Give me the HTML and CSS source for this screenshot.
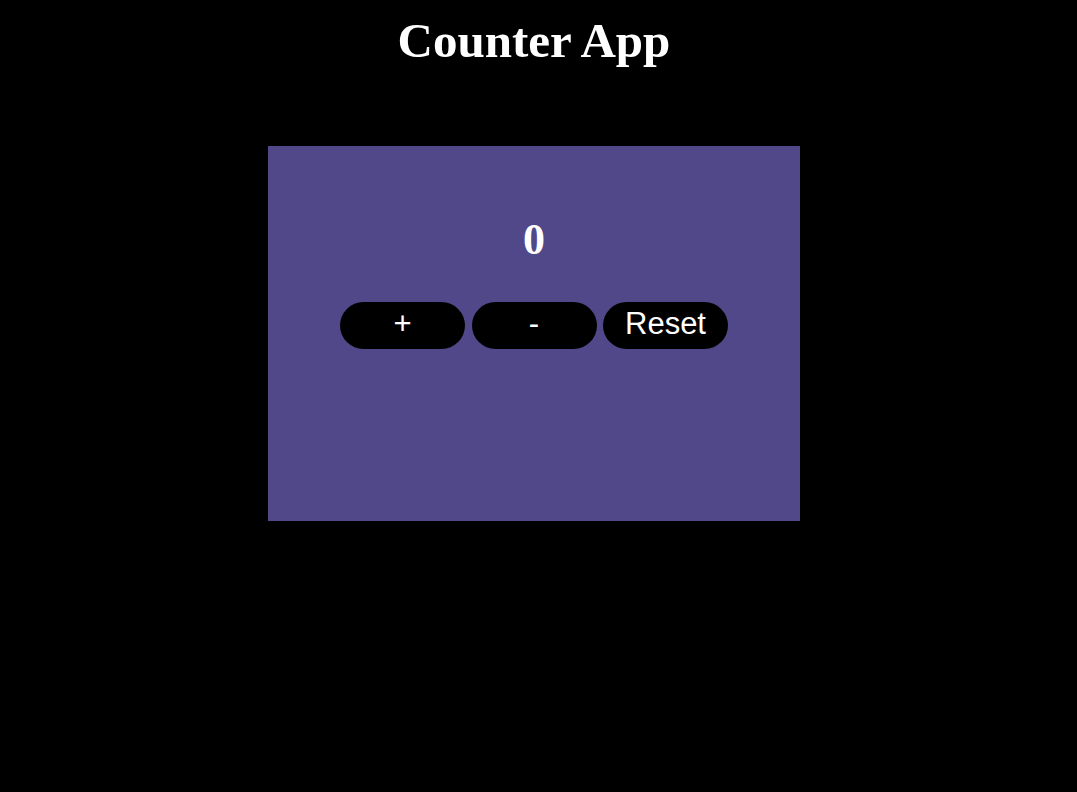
FILE: index.html
```html
<!DOCTYPE html>
<html>
<head>
<meta charset="utf-8">
<title>Counter App</title>
<link rel="stylesheet" href="styles.css">
</head>
<body>
<h1 class="title">Counter App</h1>
<div class="card">
  <div class="count">0</div>
  <div class="buttons">
    <button class="btn">+</button>
    <button class="btn">-</button>
    <button class="btn">Reset</button>
  </div>
</div>
</body>
</html>
```
FILE: styles.css
```css
html, body {
  margin: 0;
  padding: 0;
  background: #000;
  color: #fff;
  font-family: "Liberation Serif", "Times New Roman", serif;
}
body {
  display: flex;
  flex-direction: column;
  align-items: center;
  height: 792px;
  box-sizing: border-box;
  padding-right: 9px;
}
.title {
  margin: 9px 0 0;
  font-size: 49px;
  line-height: 64px;
  font-weight: bold;
}
.card {
  margin-top: 73px;
  width: 532px;
  height: 375px;
  background: #51488a;
  display: flex;
  flex-direction: column;
  align-items: center;
  box-sizing: border-box;
  padding-top: 68px;
}
.count {
  font-size: 44px;
  font-weight: bold;
  line-height: 52px;
}
.buttons {
  display: flex;
  gap: 6.5px;
  margin-top: 36px;
}
.btn {
  box-sizing: border-box;
  width: 125px;
  height: 47px;
  border: none;
  border-radius: 24px;
  background: #000;
  color: #fff;
  font-family: "Liberation Sans", Arial, sans-serif;
  font-size: 31px;
  line-height: 43px;
  padding: 0 0 4px;
  cursor: pointer;
}
```
